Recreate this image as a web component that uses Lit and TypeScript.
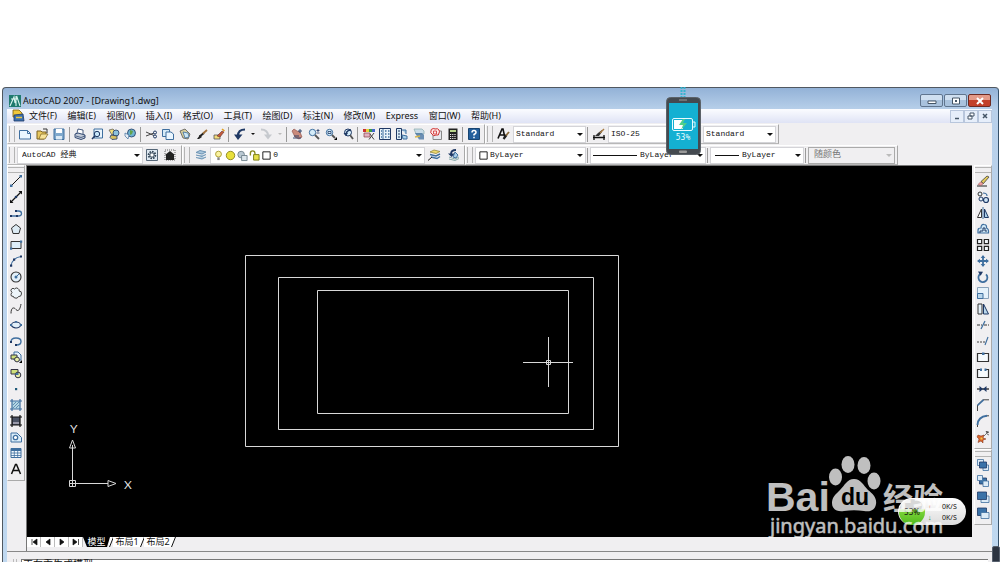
import { LitElement, html, svg, css, nothing } from "lit";
import { customElement, property } from "lit/decorators.js";

type Shape = ReturnType<typeof svg>;

const N = "#1f3864";
const B = "#3f6f9f";
const L = "#a9cfe8";

const icons: Record<string, Shape> = {
  new: svg`<path d="M.5 2.500h8l3 3v5.500h-11z" fill="#eaf6ff" stroke="${B}"/><path d="M8.500 2.500v3h3" fill="none" stroke="${B}"/>`,
  open: svg`<path d="M1 3h4l1 1h4v2L8 11H1z" fill="#e8c860" stroke="#7a6020"/><path d="M3 11l2-5h7l-3 5z" fill="#f7e39a" stroke="#7a6020" stroke-width=".7"/><path d="M7 1h4v4" fill="none" stroke="#333"/>`,
  save: svg`<path d="M1 1h10v10.500H1z" fill="#7fa8cc" stroke="${B}"/><path d="M3 1h6v4H3z" fill="#fff"/><path d="M3 8h6v3.500H3z" fill="#dceaf5"/>`,
  print: svg`<path d="M3 5l1-4 5 1v4" fill="#fff" stroke="${N}" stroke-width=".8"/><path d="M1 6l3-1 7 2v3l-4 1.500-6-2z" fill="#c3cbd8" stroke="${N}" stroke-width=".9"/><path d="M2 8l5 1.500 4-1.500" fill="none" stroke="${N}" stroke-width=".7"/>`,
  preview: svg`<path d="M3 1h8.500v9H3z" fill="#e9f4fc" stroke="${B}"/><circle cx="6" cy="6" r="2.700" fill="#c7e4f7" stroke="${N}"/><path d="M4 8l-3 3" stroke="${N}" stroke-width="1.600"/>`,
  publish: svg`<path d="M1 2l4-1 3 3-4 3z" fill="#f3de7a" stroke="#555" stroke-width=".7"/><circle cx="8" cy="5" r="3" fill="#8cc2dd" stroke="${N}" stroke-width=".8"/><path d="M3 7l6 1v3l-5 .5-2-2z" fill="#d8c060" stroke="${N}" stroke-width=".8"/>`,
  globe: svg`<circle cx="7.500" cy="5" r="4" fill="#6fb3cf" stroke="${N}" stroke-width=".8"/><path d="M6 2l3 1-1 3-2 1z" fill="#63a34b"/><path d="M1 5l4 2-1 4-3-3z" fill="#e8eef4" stroke="${B}" stroke-width=".7"/>`,
  cut: svg`<path d="M1 4l8 3.500M1 8l8-3" stroke="#444"/><circle cx="10" cy="4.500" r="1.500" fill="none" stroke="${N}"/><circle cx="10" cy="8.500" r="1.500" fill="none" stroke="${N}"/>`,
  copy: svg`<path d="M.5 1.500h7v7h-7z" fill="#d6ebf8" stroke="${B}"/><path d="M4 4h5l2.500 2v5.500H4z" fill="#eaf6ff" stroke="${B}"/>`,
  paste: svg`<path d="M1 3l5-2 5 5-2 5-5-1z" fill="#d9cf9c" stroke="#555" stroke-width=".8"/><path d="M4 4l5 1 1 4-4 1z" fill="#cbe6f5" stroke="${B}" stroke-width=".8"/>`,
  match: svg`<path d="M1 11l3-4 2 2-3 2z" fill="#222"/><path d="M3.500 8.500L8 5" stroke="#222" stroke-width="2"/><path d="M7 5.500L11 2" stroke="#a0703a" stroke-width="1.800"/>`,
  block: svg`<path d="M1 7h6v4H1z" fill="#f3dc7a" stroke="#555" stroke-width=".8"/><path d="M4 8l5-5 2 1-4 5z" fill="#c25a3a" stroke="#633" stroke-width=".6"/><path d="M9 1l2.500 2" stroke="#e2a020" stroke-width="1.600"/>`,
  undo: svg`<path d="M11 1.500Q4 1.500 4 8" fill="none" stroke="${N}" stroke-width="2.200"/><path d="M0 6.500h8.500L4 12z" fill="${N}"/>`,
  redo: svg`<path d="M1 1.500Q8 1.500 8 8" fill="none" stroke="#c6c9ce" stroke-width="2"/><path d="M4 6.500h8L8 11.500z" fill="#c6c9ce"/>`,
  pan: svg`<path d="M1 3l2-2 3 2 3 1 2 5-3 2-4-2z" fill="#c98a7b" stroke="#8a4a44" stroke-width=".6"/><path d="M9 1v4M7 3h4M3 8h5M2 10h8" stroke="${N}" stroke-width=".9"/>`,
  zoomrt: svg`<circle cx="4.500" cy="4.500" r="3.200" fill="#d5ecf9" stroke="${B}"/><path d="M7 7l4 4" stroke="#555" stroke-width="1.800"/><path d="M8.500 2.500h3M10 1v3M8.500 5h3" stroke="${N}" stroke-width=".8"/>`,
  zoomwin: svg`<circle cx="4.500" cy="4.500" r="3.200" fill="#d5ecf9" stroke="${B}"/><path d="M3 3.500h3v2H3z" fill="none" stroke="${N}" stroke-width=".8"/><path d="M7 7l3 3" stroke="#555" stroke-width="1.800"/><path d="M12 9v3H9z" fill="#000"/>`,
  zoomprev: svg`<circle cx="6" cy="4.500" r="3.500" fill="#d5ecf9" stroke="${N}"/><path d="M8 7l3 4" stroke="#555" stroke-width="1.800"/><path d="M9 2Q5 2 4 6" fill="none" stroke="${N}" stroke-width="1.500"/><path d="M1.500 5l2.500 3 2-3z" fill="${N}"/>`,
  props: svg`<path d="M0 1h3v3H0z" fill="#c33"/><path d="M3 1h3v3H3z" fill="#e7d23a"/><path d="M6 1h3v3H6z" fill="#3a9a4a"/><path d="M9 1h3v3H9z" fill="#46c"/><path d="M1 5h6v4H1z" fill="#e0b0c0" stroke="#844" stroke-width=".7"/><path d="M6 11.500L11 5M7 6l4 5.500" stroke="#444"/>`,
  dc: svg`<path d="M.5.5h11v11H.5z" fill="#e8f3fa" stroke="${N}"/><path d="M4 1v10" stroke="${B}"/><path d="M6 3h1.500M9 3h1.500M6 6h1.500M9 6h1.500M6 9h1.500M9 9h1.500M2 3h1M2 6h1M2 9h1" stroke="${B}" stroke-width="1.400"/>`,
  palettes: svg`<path d="M.5.5h5v11h-5z" fill="#d8ebf6" stroke="${N}"/><path d="M2 3h2M2 6h2M2 9h2" stroke="${N}"/><path d="M6 2h4v4M6 7l5 1v3H7z" fill="${L}" stroke="${B}"/>`,
  sheets: svg`<path d="M1 1h8l2 2v3H3z" fill="#c9dce8" stroke="#8aa" stroke-width=".7"/><path d="M2 5h7l2 2v4.500H6z" fill="${B}" opacity=".75"/><path d="M2 9l5-1" stroke="#d8b64a" stroke-width="1.500"/>`,
  markup: svg`<path d="M3 3h8.500v8.500H3z" fill="#e6e9ee" stroke="#888"/><path d="M2 1q2-1 3 0 3-1 4 1 1 2 0 3 0 3-3 2-3 2-4-1-2-1-1-3 0-2 1-2z" fill="#fde8e8" stroke="#cf3030"/><path d="M3.500 3h3v3h-3z" fill="none" stroke="#cf3030" stroke-width=".8"/>`,
  calc: svg`<path d="M1.500.5h9v11.500h-9z" fill="#222"/><path d="M3 2h6v2H3z" fill="#b8d48a"/><path d="M3 6.500h6M3 8.500h6M3 10.500h6" stroke="#eee" stroke-dasharray="1.200 1"/>`,
  help: svg`<path d="M.5.5h11v11H.5z" fill="#235f9c" stroke="#174471"/><path d="M4 4.500Q4 2.500 6 2.500T8 4.500Q8 5.500 6 6.500V7.500M6 8.800v1.500" fill="none" stroke="#fff" stroke-width="1.500"/>`,
  textstyle: svg`<path d="M0 10.500L4 1h1l2 9M2 7h4" fill="none" stroke="#111" stroke-width="1.600"/><path d="M5.500 11l3-4" stroke="#222" stroke-width="2.200"/><path d="M8 7.500l3-3.500" stroke="#8a6a3a" stroke-width="1.800"/>`,
  dimstyle: svg`<path d="M0 9.500h12M1 7v5M11 7v5" stroke="#111" stroke-width="1.300"/><path d="M2 8l3-3 4-3 0 2-3 4z" fill="#333"/><path d="M7 5l4-4" stroke="#a87c44" stroke-width="1.500"/>`,
  gear: svg`<path d="M.5.5h11v11H.5z" fill="#dfe9f2" stroke="#567"/><circle cx="6" cy="6" r="3.400" fill="none" stroke="#345" stroke-width="1.800" stroke-dasharray="1.600 1"/><circle cx="6" cy="6" r="2.200" fill="#fff" stroke="#345"/>`,
  home: svg`<path d="M1 1h10v10H1z" fill="none" stroke="#666" stroke-dasharray="1 1"/><path d="M1 6l5-4 5 4-1 0v5H2V6z" fill="#222"/>`,
  layers: svg`<path d="M1 3.500l4-2 6 1.500-4 2zM1 6l6 1.500L11 5.500M1 8.500l6 1.500 4-2" fill="#a9c6dc" stroke="#6d93b4"/>`,
  laymatch: svg`<path d="M2 3l4-2 6 1.500-4 2z" fill="#f0dc70" stroke="#887a2a" stroke-width=".7"/><path d="M2 5.500l6 1.500 4-2M3 8l6 1.500 3-2" fill="none" stroke="${B}" stroke-width="1.400"/><path d="M0 11.500L4 8" stroke="#222"/>`,
  layprev: svg`<path d="M2 8l6 2 4-2M2 10l6 1.500 4-2" fill="none" stroke="#8aa"/><path d="M9 1Q4 1 4 5" fill="none" stroke="${N}" stroke-width="1.800"/><path d="M1 4.500h7L4.500 8z" fill="${N}"/><path d="M8 3l3 3-2 3-3-1z" fill="${L}" stroke="${B}"/>`,
  line: svg`<path d="M1.500 10.500l9-9" stroke="#111"/><path d="M0 9.500h2.500V12H0zM9.500 0H12v2.500H9.500z" fill="${B}"/>`,
  xline: svg`<path d="M1 11L11 1" stroke="#111" stroke-width="1.200"/><path d="M0 12V8.500L3.500 12zM12 0v3.500L8.500 0z" fill="#111"/><circle cx="6" cy="6" r="1.300" fill="${N}"/>`,
  pline: svg`<path d="M1 9h7.500a3 2.500 0 0 0 0-5H6" fill="none" stroke="${B}" stroke-width="1.300"/><path d="M0 8h2v2H0zM5 3h2v2H5zM6 8h2v2H6z" fill="${N}"/>`,
  polygon: svg`<path d="M6 1.500l4.500 3.500-1.500 5.500H3L1.500 5z" fill="#dceaf3" stroke="#333"/>`,
  rect: svg`<path d="M1 2.500h10v7H1z" fill="#dcedf8" stroke="#333"/><path d="M0 8.500h2.200v2.200H0zM10 1.500h2.200v2.200H10z" fill="${B}"/>`,
  arc: svg`<path d="M1 11Q2 3 11 1.500" fill="none" stroke="${B}" stroke-width="1.200"/><path d="M0 9.500h2.200v2.200H0zM3 3.500h2.200v2.200H3zM10 .5h2v2h-2z" fill="${N}"/>`,
  circle: svg`<circle cx="6" cy="6" r="5" fill="#e2f0fa" stroke="#333" stroke-width="1.100"/><path d="M6 6l3-3" stroke="${B}"/><circle cx="6" cy="6" r="1.500" fill="${B}"/>`,
  cloud: svg`<path d="M2 5.500Q0 3.500 1.500 2T4.500 2Q6 0 8 1.500T9 4Q12 4 11.500 7T8.500 9.500Q7.500 12 5 11T3.500 9.500Q.5 9.500 1 7.500T2 5.500z" fill="#edf5fa" stroke="#444"/>`,
  spline: svg`<path d="M1 10.500C1 4 4 4 6 6.500S10 7 11 1" fill="none" stroke="#333"/>`,
  ellipse: svg`<ellipse cx="6" cy="6" rx="4.500" ry="3" fill="#e2f0fa" stroke="${N}" stroke-width="1.200"/><path d="M0 5h2v2H0zM10 5h2v2h-2zM5 2h2v1.500H5z" fill="${B}"/>`,
  earc: svg`<path d="M1 7Q1 3 6 3t5 3.500-4.500 3.500" fill="none" stroke="${B}" stroke-width="1.400"/><path d="M0 6h2v2H0zM5 9h2v2H5z" fill="${N}"/>`,
  insert: svg`<path d="M4 1h4l3 3v5H4z" fill="#e5f2fb" stroke="${B}"/><path d="M1 4h6v4H1z" fill="#cfe07a" stroke="#334"/><circle cx="7" cy="8.500" r="2.400" fill="#e8eea8" stroke="#334"/><path d="M12 9v3H9z" fill="#000"/>`,
  mkblock: svg`<path d="M1 2.500h7v4.500H1z" fill="#cfe07a" stroke="#334"/><circle cx="8" cy="8" r="2.800" fill="#e8eea8" stroke="#334"/><path d="M5.500 6h3v2h-3z" fill="${B}"/>`,
  point: svg`<path d="M5 5h2.200v2.200H5z" fill="#1f5a7a"/>`,
  hatch: svg`<path d="M2 2h8v8H2z" fill="#b4d7e4"/><path d="M2 0v12M10 0v12M0 2h12M0 10h12" stroke="${B}" stroke-width="1.200"/><path d="M3 6l3-3M3 9l6-6M6 9l3-3" stroke="${B}" stroke-width=".7"/>`,
  gradient: svg`<path d="M2 2h8v8H2z" fill="#4a5264"/><path d="M2 0v12M10 0v12M0 2h12M0 10h12" stroke="#111" stroke-width="1.200"/><path d="M3 8h6" stroke="#99a" stroke-width="2"/>`,
  region: svg`<path d="M1 2h6l4.500 4.500V11H1z" fill="#dceefa" stroke="${B}"/><circle cx="5.500" cy="6.500" r="2.200" fill="#fff" stroke="${B}" stroke-width="1.300"/>`,
  table: svg`<path d="M1 1.500h10v9H1z" fill="#f4faff" stroke="${B}"/><path d="M1 3h10" stroke="${B}" stroke-width="2"/><path d="M1 6h10M1 8.500h10M4.300 2v9M7.700 2v9" stroke="${B}" stroke-width=".8"/>`,
  mtext: svg`<path d="M1.500 11L5.500 1.500h1L10.500 11M3 7.500h6" fill="none" stroke="#111" stroke-width="1.500"/>`,
  erase: svg`<path d="M0 11h10" stroke="#222"/><path d="M1 9.500L4 6.500l2.500 2L4 10.500z" fill="#f0a0a0" stroke="#844" stroke-width=".5"/><path d="M4 6.500L10 1l2 1-5.500 6.500z" fill="#e2c95a" stroke="#444" stroke-width=".8"/>`,
  copyobj: svg`<circle cx="3" cy="3" r="2" fill="#e5f2fb" stroke="#333"/><circle cx="4" cy="8" r="2" fill="#e5f2fb" stroke="${N}"/><circle cx="9" cy="9" r="2.500" fill="#cfe4f5" stroke="${N}" stroke-width="1.200"/><path d="M6 2q4 0 4 3" fill="none" stroke="${B}" stroke-width="1.200"/>`,
  mirror: svg`<path d="M4.500 2v8.500H.5z" fill="#fff" stroke="#333"/><path d="M7.500 2v8.500h4z" fill="${L}" stroke="${N}"/><path d="M6 0v12" stroke="${B}"/>`,
  offset: svg`<path d="M1 10V7q0-2 3-2 0-4 3-3.500 3 0 2.500 3.500Q12 6 11.500 10z" fill="#cfe6f5" stroke="${B}" stroke-width="1.200"/><path d="M3 10V8h3V5h2v3h2" fill="none" stroke="${N}"/>`,
  array: svg`<path d="M.5.5h4.200v4.200H.5zM7.300.5h4.200v4.200H7.300zM.5 7.300h4.200v4.200H.5zM7.300 7.300h4.200v4.200H7.300z" fill="#f3f8fc" stroke="#222" stroke-width="1.200"/>`,
  move: svg`<path d="M6 1v10M1 6h10" stroke="${B}" stroke-width="1.800"/><path d="M6 0l2.300 3H3.700zM6 12l2.300-3H3.700zM0 6l3-2.300v4.600zM12 6L9 3.700v4.600z" fill="${B}"/>`,
  rotate: svg`<path d="M4 2.500a4.500 4.500 0 1 0 5 .8" fill="none" stroke="${B}" stroke-width="1.800"/><path d="M1 .5l5 .2-2.500 4z" fill="${N}"/>`,
  scale: svg`<path d="M.5.5h11v11H.5z" fill="#e5f2fb" stroke="#8aa3ba"/><path d="M.5 6.500h5.500v5H.5z" fill="#b9d7ec" stroke="${B}"/>`,
  stretch: svg`<path d="M1 1h4v10H1z" fill="#e5f2fb" stroke="#333"/><path d="M6.500 1v10h5z" fill="#b9d7ec" stroke="${N}"/>`,
  trim: svg`<path d="M0 6h5M7 6h5" stroke="#333" stroke-dasharray="3 1"/><path d="M4 10L8 2" stroke="${B}" stroke-width="1.200"/>`,
  extend: svg`<path d="M0 7h8" stroke="#444" stroke-dasharray="2 1"/><path d="M8 10l3-8" stroke="${B}" stroke-width="1.200"/>`,
  breakpt: svg`<path d="M.5 2.500h11v8H.5z" fill="#f6fafd" stroke="#333" stroke-width="1.200"/><path d="M5 1.500h2.500V4H5z" fill="${B}"/>`,
  brk: svg`<path d="M3 2.500H.5v8h11v-8H9" fill="#f6fafd" stroke="#333" stroke-width="1.200"/><path d="M3 1.500h2V4H3zM7.500 1.500h2V4h-2z" fill="${B}"/>`,
  join: svg`<path d="M0 6h12" stroke="#222" stroke-width="1.300"/><path d="M2.500 3l3.500 3-3.500 3zM9.500 3L6 6l3.500 3z" fill="${N}"/>`,
  chamfer: svg`<path d="M.5 12V6L6 .8h6" fill="none" stroke="#444"/><path d="M.5 6.500L6.500.8" stroke="${B}" stroke-width="1.600"/>`,
  fillet: svg`<path d="M.5 12V9M9 .8h3" stroke="#444"/><path d="M.5 10Q1 1.500 10 .8" fill="none" stroke="${B}" stroke-width="1.900"/>`,
  explode: svg`<path d="M1 4l3 1 3-1-1 3 3 1-3 1v3L4 10l-3 1.500 1-3.500-2-2z" fill="#d8642c" stroke="#7a2a12" stroke-width=".5"/><path d="M3.500 6.500h2v2h-2z" fill="#f4cf4a"/><path d="M7 5l3-3M9 0l1 2 2-1M10 3l2 1" stroke="#555" stroke-width=".8"/>`,
  front: svg`<path d="M.5.5h6v6h-6zM6 6h5.500v5.500H6z" fill="#dcebf7" stroke="${B}" stroke-width=".8"/><path d="M2.500 3h7v6h-7z" fill="#3a72a8" stroke="${N}" stroke-width=".8"/>`,
  back: svg`<path d="M2.500 3h7v6h-7z" fill="#3a72a8" stroke="${N}" stroke-width=".8"/><path d="M.5.5h5v5h-5zM6 6h5.500v5.500H6z" fill="#dcebf7" stroke="${B}" stroke-width=".8"/>`,
  above: svg`<path d="M4 5h8v6.500H4z" fill="#dcebf7" stroke="${B}" stroke-width=".8"/><path d="M.5 1h9v7.500h-9z" fill="#3a72a8" stroke="${N}" stroke-width=".8"/>`,
  under: svg`<path d="M.5 1h9v7.500h-9z" fill="#3a72a8" stroke="${N}" stroke-width=".8"/><path d="M4 5.500h8v6H4z" fill="#dcebf7" stroke="${B}" stroke-width=".8"/>`,
  app: svg`<path d="M0 0h12v12H0z" fill="#1f7a6e"/><path d="M1 11L5 2l1 6 2-6 3 9M2 4h7M7 1v10" fill="none" stroke="#d9f4ee" stroke-width="1.100"/>`,
  doc: svg`<path d="M1 0h6l3 3v4H1z" fill="#f2c83a" stroke="#775a10" stroke-width=".8"/><path d="M2 5l9-1 1 7H2z" fill="#3b6fae" stroke="${N}" stroke-width=".8"/><path d="M4 7.500h6" stroke="#e8c84a" stroke-width="1.500"/>`,
  bulb: svg`<circle cx="6" cy="4.500" r="3.200" fill="#fbf3a0" stroke="#a89a30"/><path d="M4.700 8h2.600v3H4.700z" fill="#888"/>`,
  sun: svg`<circle cx="6" cy="6" r="4.600" fill="#e8e03c" stroke="#8b8420"/>`,
  vp: svg`<circle cx="4.500" cy="5" r="3.600" fill="#b9c8d2" stroke="#72838e"/><path d="M5 6h6v5.500H5z" fill="#dce6ec" stroke="#72838e"/>`,
  lock: svg`<path d="M1.500 6V3.500q0-2.500 2.500-2.500t2.500 2.500V5" fill="none" stroke="#888a20" stroke-width="1.500"/><path d="M5 5h6v6H5z" fill="#e6e04a" stroke="#777a10"/>`,
  swatch: svg`<path d="M2 2h8v8H2z" fill="#fff" stroke="#111"/>`,
};

@customElement("tool-icon")
class ToolIcon extends LitElement {
  static styles = css`
    :host { display: block; width: 12px; height: 12px; flex: none; }
    svg { display: block; width: 100%; height: 100%; overflow: visible; }
  `;
  @property() name = "";
  render() {
    return html`<svg viewBox="0 0 12 12" aria-hidden="true">${icons[this.name] ?? nothing}</svg>`;
  }
}

const menus = ["文件(F)", "编辑(E)", "视图(V)", "插入(I)", "格式(O)", "工具(T)", "绘图(D)", "标注(N)", "修改(M)", "Express", "窗口(W)", "帮助(H)"];
const standard = ["new", "open", "save", "|", "print", "preview", "publish", "globe", "|", "cut", "copy", "paste", "match", "block", "|", "undo", "v", "redo", "x", "|", "pan", "zoomrt", "zoomwin", "zoomprev", "|", "props", "dc", "palettes", "sheets", "markup", "calc", "|", "help"];
const draw = ["line", "xline", "pline", "polygon", "rect", "arc", "circle", "cloud", "spline", "ellipse", "earc", "insert", "mkblock", "point", "hatch", "gradient", "region", "table", "mtext"];
const modify = ["erase", "copyobj", "mirror", "offset", "array", "move", "rotate", "scale", "stretch", "trim", "extend", "breakpt", "brk", "join", "chamfer", "fillet", "explode"];
const order = ["front", "back", "above", "under"];

@customElement("app-root")
class AppRoot extends LitElement {
  static styles = css`
    * { box-sizing: border-box; }
    :host {
      display: flex; flex-direction: column; height: 100vh; overflow: hidden; position: relative;
      background: #fff; color: #111;
      font: 9px/12px "Noto Sans", "Noto Sans CJK SC", sans-serif;
    }
    button, select { font: inherit; color: inherit; margin: 0; padding: 0; border: 0; background: none; }
    .desk { flex: none; height: 87px; background: #fff; }
    .window {
      flex: 1; min-height: 0; display: flex; flex-direction: column;
      margin: 0 1px 0 2px; padding: 0 6px 0 4px;
      border: 1px solid #505860; border-bottom: 0; border-right-color: #34506a; border-radius: 4px 4px 0 0;
      background: linear-gradient(#93b2d7 0, #b8d0ea 22px, #bfd8f0 100%);
    }
    .title { flex: none; height: 21px; display: flex; align-items: center; gap: 2px; padding: 4px 1px 0 2px; }
    .title .name { flex: 1; font: 9px/12px "Noto Sans", sans-serif; }
    .winbtns { display: flex; gap: 1px; }
    .winbtns button {
      width: 23px; height: 13px; display: grid; place-items: center;
      border: 1px solid #60758e; border-radius: 2px;
      background: linear-gradient(#cfdff0 45%, #a9c2dd 50%);
    }
    .winbtns .close { background: linear-gradient(#e39a88 45%, #c2402a 50%); border-color: #6d2a22; }
    .winbtns svg, .mdi svg { display: block; width: 10px; height: 8px; }
    .menubar {
      flex: none; height: 14px; display: flex; align-items: center; gap: 5px; padding-left: 5px;
      background: linear-gradient(#fbfcff, #dfe3f5);
    }
    .menubar nav { display: flex; flex: 0 1 472px; justify-content: space-between; }
    .menubar button { white-space: nowrap; line-height: 12px; }
    .mdi { display: flex; margin-left: auto; }
    .mdi button { width: 14px; height: 13px; display: grid; place-items: center; border: 1px solid #b8c6dc; background: #e6eefa; }
    .rows { flex: none; background: #f0eff1; display: grid; grid-auto-rows: 20px; gap: 1px; padding: 1px 0 0; }
    .row { display: flex; }
    .bar { display: flex; align-items: center; padding: 0 2px 0 1px; border: 1px solid #fff; border-right-color: #a8a8a8; border-bottom-color: #b8b8b8; }
    .grip { flex: none; width: 6px; height: 16px; margin-right: 2px; border: solid #b4b4b4; border-width: 0 1px; }
    .grip.flat { width: 16px; height: 6px; margin: 0; border-width: 1px 0; }
    .cell { flex: 1 1 17px; min-width: 0; height: 16px; display: grid; place-items: center; }
    .sep { flex: none; width: 1px; height: 15px; margin: 0 2px 0 1px; background: #9a9a9a; }
    .drop { flex: none; width: 10px; height: 16px; display: grid; place-items: center; }
    .caret { flex: none; width: 0; height: 0; border: 3px solid transparent; border-top-color: #111; border-bottom: 0; }
    .drop .caret { border-width: 2px; border-bottom: 0; }
    .caret.off { border-top-color: #bbb; }
    .std { width: 478px; }
    .styles { width: 294px; }
    .work { width: 175px; }
    .lay { width: 283px; }
    .prop { width: 433px; }
    .combo {
      flex: 1; min-width: 0; height: 17px; display: flex; align-items: center; gap: 1px; position: relative;
      padding: 0 2px; background: #fff; border: 1px solid #d4d4d8;
    }
    .combo select {
      flex: 1; min-width: 0; height: 15px; appearance: none; outline: 0;
      font: 8px/14px "Liberation Mono", "Noto Sans CJK SC", monospace;
    }
    .combo tool-icon { width: 11px; height: 11px; }
    .combo.off { background: #f0eff1; border-color: #aaa; color: #777; padding-left: 5px; }
    .combo.off select { opacity: 1; font-size: 9px; }
    .rule { flex: none; width: 44px; height: 1px; background: #111; margin-right: 2px; }
    .rule.short { width: 24px; margin-left: 2px; }
    .w72 { flex: 0 0 73px; }
    .w93 { flex: 0 0 94px; }
    .w111 { flex: 0 0 111px; }
    .w115 { flex: 0 0 116px; }
    .w126 { flex: 0 0 126px; padding-left: 4px; }
    .w215 { flex: 0 0 215px; }
    .main { flex: 1; min-height: 0; display: grid; grid-template-columns: 19px minmax(0, 1fr) 20px; background: #f0eff1; }
    .side { display: flex; flex-direction: column; align-items: flex-start; }
    .side.right { align-items: flex-end; }
    .palette {
      display: flex; flex-direction: column; align-items: center; width: 18px; padding: 1px 0 3px;
      border: 1px solid #fff; border-right-color: #aaa; border-bottom-color: #aaa;
    }
    .palette .cell { flex: none; width: 16px; height: 16px; }
    .center { display: flex; flex-direction: column; min-width: 0; min-height: 0; border: solid #777; border-width: 1px 0 0 1px; }
    .canvas { flex: 1; min-height: 0; background: #000; overflow: hidden; }
    .canvas svg { display: block; }
    .canvas text { font: 12px "Lato", sans-serif; fill: #ddd; }
    .tabs { flex: none; height: 10px; display: flex; background: #f0eff1; margin-bottom: 4px; }
    .tabs .nav { width: 14px; height: 10px; display: grid; place-items: center; background: #fff; border-right: 1px solid #bbb; }
    .tabs .nav svg { width: 8px; height: 8px; display: block; }
    .tabs .tab { height: 10px; line-height: 10px; width: 28px; background: #fff; white-space: nowrap; }
    .tabs .tab.on { width: 27px; background: #000; color: #fff; clip-path: polygon(0 0, 100% 0, 24px 100%, 4px 100%); }
    .tabs .slash { flex: none; width: 5px; height: 10px; margin: 0 -1px; display: block; }
    .cmd { flex: none; height: 11px; background: #f0eff1; border-top: 1px solid #888; padding: 7px 4px 0 6px; display: flex; gap: 4px; overflow: hidden; }
    .cmd .mark { width: 4px; height: 6px; border: solid #bbb; border-width: 0 1px; }
    .cmd output { flex: 1; height: 12px; border-top: 1px solid #777; border-left: 1px solid #777; background: #fff; padding-left: 1px; font-size: 10px; line-height: 9px; }
    .phone { position: absolute; left: 666px; top: 87px; width: 35px; height: 68px; }
    .phone svg, .mark-bd svg { display: block; overflow: visible; }
    .phone text { font: 8px "DejaVu Sans Mono", monospace; fill: #e8fbff; text-anchor: middle; }
    .mark-bd { position: absolute; right: 50px; bottom: 18px; width: 184px; height: 90px; }
    .bai { font: bold 41px "Liberation Sans", sans-serif; }
    .du { font: bold 23px "Liberation Sans", sans-serif; fill: #000; }
    .jy { font: bold 30px "Noto Sans CJK SC", sans-serif; }
    .url { font: 20px "Noto Sans", sans-serif; stroke: #fff; stroke-width: .5px; }
    .net {
      position: absolute; right: 34px; bottom: 37px; width: 68px; height: 27px; border-radius: 14px;
      display: flex; align-items: center; background: linear-gradient(#fff, #dcdcdc);
      font: 7px/11px "Noto Sans", sans-serif; color: #111;
    }
    .ball { width: 26px; height: 26px; margin-left: 1px; border-radius: 50%; display: grid; place-items: center; background: linear-gradient(#d8d8d8 38%, #7fd63a 42%, #4fb81c); font-size: 8px; }
    .net dl { margin: 0 0 0 3px; display: grid; grid-template-columns: 14px auto; }
    .net dt { color: #d24a1e; font-weight: bold; }
    .net dt.dn { color: #1b8a2c; }
    .net dd { margin: 0; }
    .tray { position: absolute; right: 0; bottom: 0; width: 8px; height: 16px; background: #2b3340; border: 1px solid #565f6c; border-radius: 2px 2px 0 0; }
  `;

  private tool(name: string) {
    if (name === "|") return html`<span class="sep"></span>`;
    if (name === "v" || name === "x") return html`<button class="drop" aria-label="history"><span class="caret ${name === "x" ? "off" : ""}"></span></button>`;
    return html`<button class="cell" aria-label=${name}><tool-icon name=${name}></tool-icon></button>`;
  }

  private combo(label: string, value: string, size = "", pre: unknown = nothing, off = false) {
    return html`<label class="combo ${size} ${off ? "off" : ""}">${pre}<select aria-label=${label} ?disabled=${off}><option>${value}</option></select><span class="caret ${off ? "off" : ""}"></span></label>`;
  }

  render() {
    const grip = html`<span class="grip"></span>`;
    const sep = html`<span class="sep"></span>`;
    const slash = html`<svg class="slash" viewBox="0 0 5 10"><path d="M0 0h5L1 10H0z" fill="#fff"/><path d="M4.500 0L.5 10" stroke="#111"/></svg>`;
    return html`
      <div class="desk"></div>
      <div class="window">
        <header class="title">
          <tool-icon name="app"></tool-icon>
          <span class="name">AutoCAD 2007 - [Drawing1.dwg]</span>
          <div class="winbtns">
            <button aria-label="minimize"><svg viewBox="0 0 10 8"><path d="M1 4h8v2.500H1z" fill="#fff" stroke="#456"/></svg></button>
            <button aria-label="maximize"><svg viewBox="0 0 10 8"><path d="M1.500 1h7v6h-7z" fill="#fff" stroke="#456"/><path d="M4 3h2v2H4z" fill="#456"/></svg></button>
            <button class="close" aria-label="close"><svg viewBox="0 0 10 8"><path d="M2 1l6 6M8 1L2 7" stroke="#fff" stroke-width="2"/></svg></button>
          </div>
        </header>
        <div class="menubar">
          <tool-icon name="doc"></tool-icon>
          <nav>${menus.map((m) => html`<button>${m}</button>`)}</nav>
          <div class="mdi">
            <button aria-label="minimize drawing"><svg viewBox="0 0 10 8"><path d="M3 6.500h4" stroke="#456" stroke-width="1.500"/></svg></button>
            <button aria-label="restore drawing"><svg viewBox="0 0 10 8"><path d="M4 1h4v3H4zM2 4h4v3H2z" fill="#fff" stroke="#456"/></svg></button>
            <button aria-label="close drawing"><svg viewBox="0 0 10 8"><path d="M3 2l4 4M7 2L3 6" stroke="#456" stroke-width="1.500"/></svg></button>
          </div>
        </div>
        <div class="rows">
          <div class="row">
            <div class="bar std">${grip}${standard.map((n) => this.tool(n))}</div>
            <div class="bar styles">${grip}${this.tool("textstyle")}${this.combo("text style", "Standard", "w72")}${sep}${this.tool("dimstyle")}${this.combo("dimension style", "ISO-25", "w72")}${sep}${this.tool("table")}${this.combo("table style", "Standard", "w72")}</div>
          </div>
          <div class="row">
            <div class="bar work">${grip}${this.combo("workspace", "AutoCAD 经典", "w126")}${this.tool("gear")}${this.tool("home")}</div>
            <div class="bar lay">${grip}${this.tool("layers")}${this.combo("layer", "0", "w215", html`${["bulb", "sun", "vp", "lock", "swatch"].map((n) => html`<tool-icon name=${n}></tool-icon>`)}`)}${this.tool("laymatch")}${this.tool("layprev")}</div>
            <div class="bar prop">${grip}${this.combo("color", "ByLayer", "w111", html`<tool-icon name="swatch"></tool-icon>`)}${sep}${this.combo("linetype", "ByLayer", "w115", html`<span class="rule"></span>`)}${sep}${this.combo("lineweight", "ByLayer", "w93", html`<span class="rule short"></span>`)}${sep}${this.combo("plot style", "随颜色", "", nothing, true)}</div>
          </div>
        </div>
        <div class="main">
          <div class="side"><div class="palette"><span class="grip flat"></span>${draw.map((n) => this.tool(n))}</div></div>
          <div class="center">
            <div class="canvas">
              <svg width="945" height="371" fill="none" stroke="#d8d8d8">
                <path d="M218.500 89.500h373v191h-373zM251.500 111.500h315v152h-315zM290.500 124.500h251v123h-251z"/>
                <path d="M521.500 171v50M496 196.500h50M519.500 194.500h4v4h-4z"/>
                <path d="M42.500 314.500h6v6h-6zM45.500 320v-41M42 317.500h39M45.500 274l-3 8h6zM89 317.500l-8-3v6z"/>
                <text x="97" y="323" stroke="none">X</text><text x="43" y="267" stroke="none">Y</text>
              </svg>
            </div>
            <div class="tabs">
              ${["M2 1v6M7 1v6L3 4z", "M6 1v6L2 4z", "M2 1v6l4-3z", "M6.500 1v6M1 1v6l4-3z"].map((d, i) => html`<button class="nav" aria-label="tab ${i + 1}"><svg viewBox="0 0 8 8"><path d=${d} fill="#111" stroke="#111" stroke-width=".7"/></svg></button>`)}
              <button class="tab on">模型</button>${slash}
              <button class="tab">布局1</button>${slash}
              <button class="tab">布局2</button>${slash}
            </div>
          </div>
          <div class="side right">
            <div class="palette"><span class="grip flat"></span>${modify.map((n) => this.tool(n))}</div>
            <div class="palette"><span class="grip flat"></span>${order.map((n) => this.tool(n))}</div>
          </div>
        </div>
        <div class="cmd"><span class="mark"></span><output>正在重生成模型。</output></div>
      </div>
      <div class="net"><span class="ball">53%</span><dl><dt>↑</dt><dd>0K/S</dd><dt class="dn">↓</dt><dd>0K/S</dd></dl></div>
      <div class="mark-bd">
        <svg width="184" height="90" viewBox="766 454 184 90" fill="#fff" opacity=".75">
          <text class="bai" x="766" y="511">Bai</text>
          <ellipse cx="835.500" cy="477" rx="6.500" ry="8.500"/><ellipse cx="848" cy="464.500" rx="6.500" ry="8.500"/><ellipse cx="864" cy="465.500" rx="6.500" ry="8.500"/><ellipse cx="874" cy="481" rx="6.500" ry="8.500"/>
          <path d="M854 479c7 0 9 6 14 11 5 4 9 8 8 14-1 7-7 8-12 7-7-1-13-1-20 0-6 1-12-1-12-8 0-6 4-9 8-13 5-5 7-11 14-11z"/>
          <text class="du" x="841" y="505">du</text>
          <text class="jy" x="883" y="509">经验</text>
          <text class="url" x="770" y="533">jingyan.baidu.com</text>
        </svg>
      </div>
      <div class="phone">
        <svg width="35" height="68" viewBox="0 0 35 68">
          <path d="M15.500 0v10M18.500 0v10" stroke="#35b3cf" stroke-width="2" stroke-dasharray="2 1"/>
          <rect x=".5" y="10.500" width="34" height="57" rx="4" fill="#444a50" stroke="#5c6268"/>
          <path d="M13 13h8" stroke="#999"/><rect x="3" y="16" width="29" height="46" fill="#14b0d2"/>
          <rect x="13" y="63.500" width="8" height="2.500" rx="1" fill="#999"/>
          <rect x="6.500" y="31.500" width="20" height="12" rx="1.500" fill="none" stroke="#e8fbff"/><path d="M8 33h9v9H8z" fill="#fff"/><path d="M27 35h2v5h-2" fill="none" stroke="#e8fbff"/>
          <path d="M17 32l-4 6h4l-2 5 6-7h-4l2-4z" fill="#4fd08a"/>
          <text x="17" y="53">53%</text>
        </svg>
      </div>
      <div class="tray"></div>
    `;
  }
}
